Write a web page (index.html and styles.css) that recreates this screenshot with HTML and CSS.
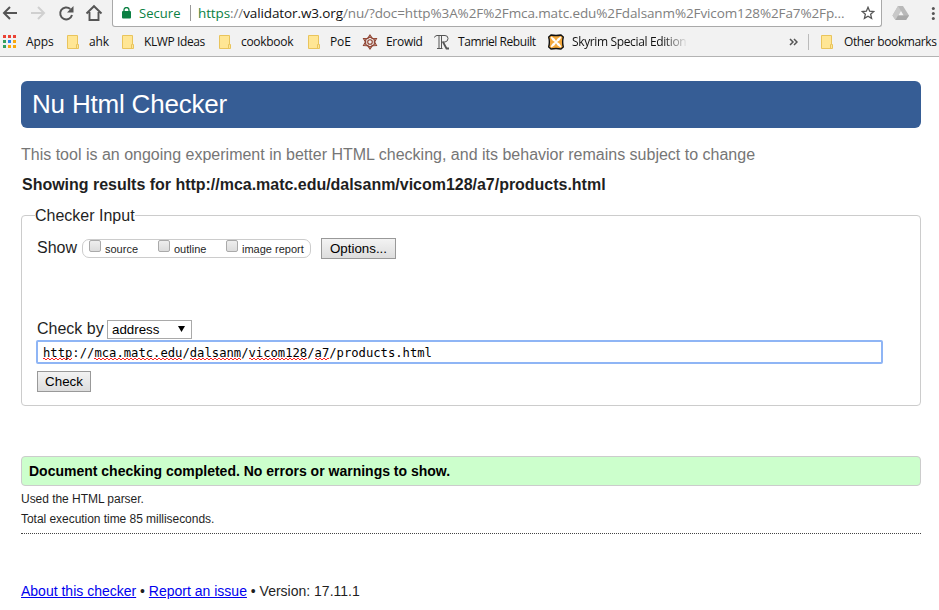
FILE: index.html
```html
<!DOCTYPE html>
<html lang="en">
<head>
<meta charset="utf-8">
<title>Nu Html Checker</title>
<link rel="stylesheet" href="styles.css">
</head>
<body>
<header class="browser">
  <div class="toolbar">
    <svg class="nav" width="112" height="27" viewBox="0 0 112 27" fill="none" stroke="#555" stroke-width="2">
      <path d="M17 13H4.500M10 7l-6 6 6 6"/>
      <path stroke="#d0d0d0" d="M31 13h12.500M38 7l6 6-6 6"/>
      <path d="M70.300 9A6 6 0 1 0 72 15"/><path fill="#555" stroke="none" d="M73.500 6v6.500H67z"/>
      <path d="M86.500 13.500L94 6.200l7.500 7.300M89.500 12v8h9v-8" stroke-width="1.900"/>
    </svg>
    <div class="omnibox">
      <svg class="lock" width="9" height="12" viewBox="0 0 9 12"><path d="M2 5V3a2.500 2.500 0 0 1 5 0v2" fill="none" stroke="#0b8043" stroke-width="1.300"/><rect y="4" width="9" height="7.500" rx="1" fill="#0b8043"/></svg>
      <span class="secure">Secure</span>
      <span class="sep"></span>
      <span class="url"><i class="scheme">https</i>://<b>validator.w3.org</b>/nu/?doc=http%3A%2F%2Fmca.matc.edu%2Fdalsanm%2Fvicom128%2Fa7%2Fp...</span>
      <svg class="star" width="14" height="14" viewBox="0 0 14 14"><path d="M7 1.300l1.650 3.850 4.150.4-3.150 2.750.95 4.100L7 10.200l-3.600 2.200.95-4.100L1.200 5.550l4.150-.4z" fill="none" stroke="#555" stroke-width="1.300"/></svg>
    </div>
    <svg class="ext" width="57" height="27" viewBox="0 0 57 27">
      <path d="M16 6h5l6 9.500-3 4.500H13.500L10.500 15.500z" fill="#b9b9b9"/><path d="M16 6l3 5-5.500 9-3-4.500z" fill="#c9c9c9"/><path d="M19 11l2.700 4.500h-5.400z" fill="#f2f2f2"/><path d="M16 15.500h11L24 20H13.500z" fill="#a9a9a9"/>
      <g fill="#555"><circle cx="51.300" cy="8.500" r="1.500"/><circle cx="51.300" cy="13.500" r="1.500"/><circle cx="51.300" cy="18.500" r="1.500"/></g>
    </svg>
  </div>
  <nav class="bookmarks">
    <div class="bm apps"><svg width="14" height="14" viewBox="0 0 14 14"><path fill="#ea4335" d="M0 0h3v3H0zM5 0h3v3H5zM10 0h3v3h-3z"/><path fill="#34a060" d="M0 5h3v3H0zM0 10h3v3H0z"/><path fill="#2b84ee" d="M5 5h3v3H5z"/><path fill="#f9a80d" d="M10 5h3v3h-3zM5 10h3v3H5zM10 10h3v3h-3z"/></svg><span>Apps</span></div>
    <div class="bm ahk"><svg class="folder" width="12" height="14" viewBox="0 0 12 14"><path d="M.5.500h10v9h1v4H.5z" fill="#ffe694" stroke="#e9c45c"/><path d="M9.500 13V9.500h1" fill="none" stroke="#e9c45c"/></svg><span>ahk</span></div>
    <div class="bm klwp"><svg class="folder" width="12" height="14" viewBox="0 0 12 14"><path d="M.5.500h10v9h1v4H.5z" fill="#ffe694" stroke="#e9c45c"/><path d="M9.500 13V9.500h1" fill="none" stroke="#e9c45c"/></svg><span>KLWP Ideas</span></div>
    <div class="bm cook"><svg class="folder" width="12" height="14" viewBox="0 0 12 14"><path d="M.5.500h10v9h1v4H.5z" fill="#ffe694" stroke="#e9c45c"/><path d="M9.500 13V9.500h1" fill="none" stroke="#e9c45c"/></svg><span>cookbook</span></div>
    <div class="bm poe"><svg class="folder" width="12" height="14" viewBox="0 0 12 14"><path d="M.5.500h10v9h1v4H.5z" fill="#ffe694" stroke="#e9c45c"/><path d="M9.500 13V9.500h1" fill="none" stroke="#e9c45c"/></svg><span>PoE</span></div>
    <div class="bm wide erowid"><svg width="16" height="16" viewBox="0 0 16 16" fill="none" stroke="#8d3f2c" stroke-width="1.100"><path d="M8 1l2.300 3.200 4.200.3L12.600 8l1.900 3.500-4.200.3L8 15l-2.300-3.200-4.200-.3L3.400 8 1.500 4.500l4.200-.3z"/><path d="M8 3l4.300 2.500v5L8 13l-4.300-2.500v-5z"/><circle cx="8" cy="8" r="2.300"/></svg><span>Erowid</span></div>
    <div class="bm wide tamriel"><svg width="16" height="16" viewBox="0 0 16 16" fill="none" stroke="#555"><path d="M.5 3.500Q1 1.500 3 1.500h8q3 0 3 3T11 8H7.500M5 2v12.500M7.500 2v12.500M3 14.500h5.500"/><path d="M9 8l3.500 6.500H15" stroke-width="1.800"/></svg><span>Tamriel Rebuilt</span></div>
    <div class="bm wide skyrim"><svg width="16" height="16" viewBox="0 0 16 16"><path d="M3 1q5 1 10 0l2.300 2q-1.300 5 0 10l-2.300 2q-5-1-10 0L.7 13q1.300-5 0-10z" fill="#f3a83b" stroke="#111" stroke-width="1.400"/><path d="M3 3q4 1 5 5 1-4 5-5-1 4-5 5 4 1 5 5-4-1-5-5-1 4-5 5 1-4 5-5-4-1-5-5z" fill="#fff" stroke="#fff" stroke-width=".8"/></svg><span>Skyrim Special Edition</span></div>
    <svg class="more" width="9" height="8" viewBox="0 0 9 8"><path d="M1 1l3 3-3 3M5 1l3 3-3 3" fill="none" stroke="#555" stroke-width="1.500"/></svg>
    <span class="divider"></span>
    <div class="bm other"><svg class="folder" width="12" height="14" viewBox="0 0 12 14"><path d="M.5.500h10v9h1v4H.5z" fill="#ffe694" stroke="#e9c45c"/><path d="M9.500 13V9.500h1" fill="none" stroke="#e9c45c"/></svg><span>Other bookmarks</span></div>
  </nav>
</header>
<main>
  <h1>Nu Html Checker</h1>
  <p class="about">This tool is an ongoing experiment in better HTML checking, and its behavior remains subject to change</p>
  <h2>Showing results for http://mca.matc.edu/dalsanm/vicom128/a7/products.html</h2>
  <form class="checker">
    <div class="legend">Checker Input</div>
    <div class="show-row">
      <span>Show</span>
      <div class="checks">
        <label class="source"><i class="box"></i><span>source</span></label>
        <label class="outline"><i class="box"></i><span>outline</span></label>
        <label class="report"><i class="box"></i><span>image report</span></label>
      </div>
      <button type="button" class="options">Options...</button>
    </div>
    <div class="by-row"><span>Check by</span><div class="select"><span>address</span><svg width="7" height="6" viewBox="0 0 7 6"><path d="M0 0h7L3.500 6z"/></svg></div></div>
    <div class="field"><u>http</u>://<u>mca.matc.edu</u>/<u>dalsanm</u>/<u>vicom128</u>/<u>a7</u>/products.html</div>
    <button type="button" class="check">Check</button>
  </form>
  <p class="success">Document checking completed. No errors or warnings to show.</p>
  <div class="details"><p>Used the HTML parser.</p><p>Total execution time 85 milliseconds.</p></div>
  <footer><a href="#">About this checker</a> • <a href="#">Report an issue</a> • Version: 17.11.1</footer>
</main>
</body>
</html>
```
FILE: styles.css
```css
* { box-sizing: border-box; }
body { margin: 0; background: #fff; color: #1f1f1f; font-family: "Liberation Sans", Arial, sans-serif; overflow: hidden; }
h1, h2, p { margin: 0; }
svg { display: block; flex: none; }
.browser { height: 57px; background: #f2f2f2; border-bottom: 1px solid #b3b3b3; font-family: "Open Sans", "Noto Sans", sans-serif; }
.toolbar { display: flex; height: 27px; }
.omnibox { display: flex; align-items: center; width: 770px; height: 27px; padding: 0 6px 0 9px; background: #fff; border: 1px solid #a9a9a9; border-top: 0; border-radius: 0 0 3px 3px; }
.secure { width: 51px; margin-left: 8px; color: #0b8043; font-size: 13px; letter-spacing: .05px; white-space: nowrap; }
.sep { width: 1px; height: 16px; background: #999; }
.url { width: 654px; margin-left: 7px; color: #808080; font-size: 13.5px; letter-spacing: -.11px; white-space: nowrap; }
.url b { color: #111; font-weight: 400; }
.url i { font-style: normal; }
.url .scheme { color: #0b8043; }
.star { margin-left: 9px; }
.bookmarks { display: flex; align-items: center; height: 29px; padding-left: 3px; color: #111; font-size: 12px; }
.bm { display: flex; align-items: center; gap: 10px; flex: none; white-space: nowrap; letter-spacing: -.1px; }
.wide { gap: 8px; }
.apps { width: 64px; gap: 9px; }
.ahk { width: 55px; }
.klwp { width: 97px; letter-spacing: -.4px; }
.cook { width: 89px; letter-spacing: -.3px; }
.poe { width: 54px; }
.erowid { width: 72px; letter-spacing: -.3px; }
.tamriel { width: 114px; letter-spacing: -.45px; }
.skyrim { width: 138px; overflow: hidden; letter-spacing: -.36px; -webkit-mask-image: linear-gradient(90deg, #000 115px, transparent 140px); mask-image: linear-gradient(90deg, #000 115px, transparent 140px); }
.more { margin-left: 103px; }
.divider { width: 1px; height: 16px; margin: 0 12px 0 10px; background: #bbb; }
.other { gap: 11px; letter-spacing: -.4px; }
main { padding: 24px 18px 0 21px; }
h1 { height: 47px; padding-left: 11px; border-radius: 6px; background: #365d95; color: #fff; font-size: 26px; font-weight: 400; letter-spacing: -.19px; line-height: 46px; }
.about { margin-top: 17px; color: #767676; font-size: 16px; line-height: 20px; white-space: nowrap; }
h2 { margin-top: 10px; padding-left: 1px; font-size: 16px; letter-spacing: -.02px; line-height: 20px; white-space: nowrap; }
.checker { height: 191px; margin-top: 20px; padding: 0 15px; border: 1px solid #ccc; border-radius: 4px; font-size: 16px; }
.legend { width: 100px; height: 20px; margin: -11px 0 0 -2px; background: #fff; line-height: 21px; white-space: nowrap; }
.show-row { display: flex; height: 22px; margin-top: 13px; line-height: 20px; }
.show-row > span { width: 45px; }
.checks { display: flex; width: 229px; height: 19px; margin-top: 1px; padding-left: 6px; border: 1px solid #ccc; border-radius: 7px; font-size: 11px; }
.checks label { display: flex; line-height: 19px; white-space: nowrap; }
.box { width: 12px; height: 12px; margin-right: 4px; border: 1px solid #aaa; border-radius: 2px; background: linear-gradient(#eee, #dcdcdc); }
.source { width: 69px; }
.outline { width: 68px; }
button { padding: 0; border: 1px solid #999; border-radius: 0; background: linear-gradient(#f3f3f3, #ddd); color: #000; font: 13.333px "Liberation Sans", Arial, sans-serif; }
.options { width: 75px; height: 21px; margin-left: 10px; }
.by-row { display: flex; height: 21px; margin: 59px 0 0; line-height: 19px; }
.by-row > span { width: 70px; white-space: nowrap; }
.select { display: flex; align-items: center; justify-content: space-between; width: 85px; height: 19px; margin-top: 1px; padding: 0 6px 0 4px; border: 1px solid #a9a9a9; color: #000; font-size: 13.333px; }
.select svg { margin-top: -2px; }
.field { width: 847px; height: 24px; margin: 0 0 0 -1px; padding-left: 5px; border: 2px solid #8fb5f5; border-radius: 2px; color: #000; font: 12.19px/22px "DejaVu Sans Mono", monospace; white-space: nowrap; }
.field u { display: inline-block; height: 18px; vertical-align: top; text-decoration: none; background: conic-gradient(from 90deg at 2px 1px, #f22 25%, transparent 0 50%, #f22 0 75%, transparent 0) 0 16px / 4px 2px repeat-x; }
.check { display: block; width: 54px; height: 21px; margin-top: 7px; }
.success { height: 30px; margin-top: 50px; padding-left: 7px; border: 1px solid #ccc; border-radius: 4px; background: #cfc; color: #000; font-size: 14px; font-weight: 700; line-height: 28px; }
.details { height: 48px; padding-top: 3px; border-bottom: 1px dotted #444; font-size: 12px; letter-spacing: -.04px; line-height: 20px; }
footer { margin-top: 47px; font-size: 14px; line-height: 20px; }
a { color: #00e; }
```
